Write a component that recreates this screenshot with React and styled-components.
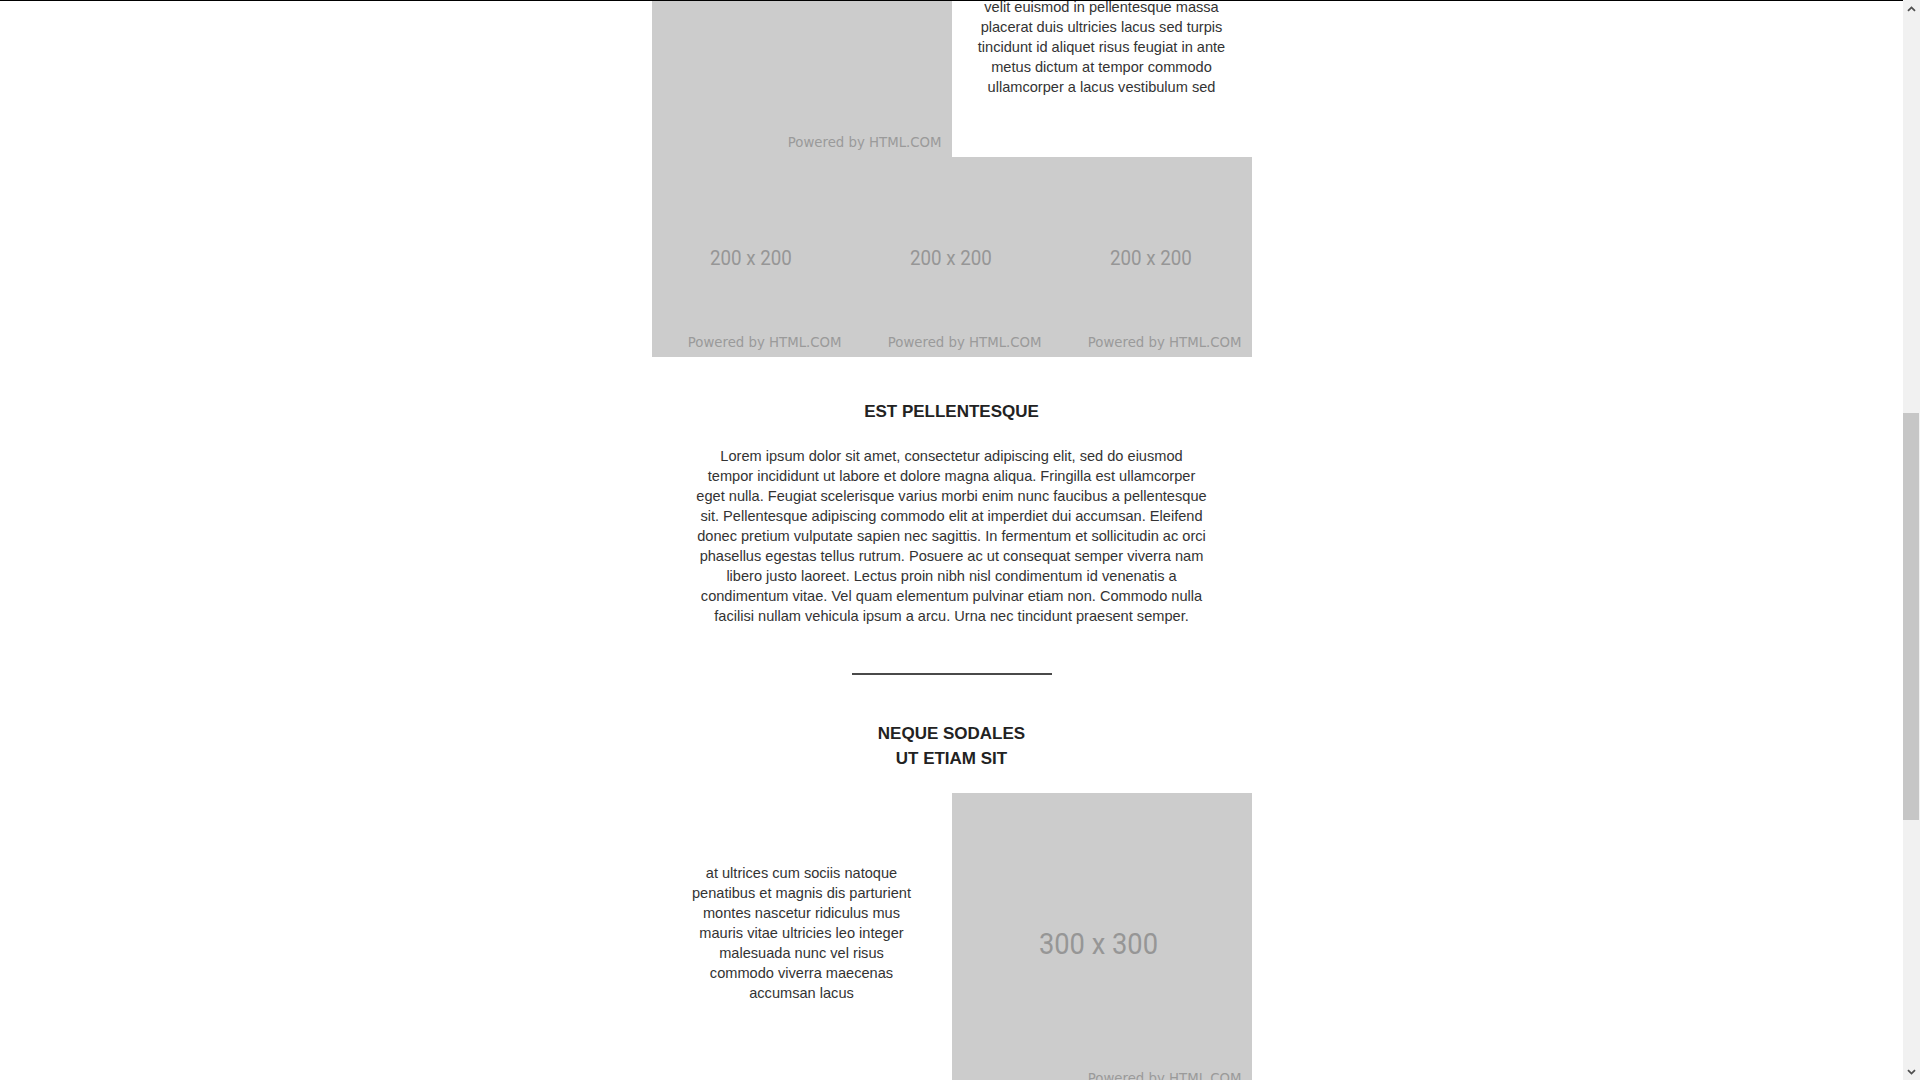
import React, { useLayoutEffect, useRef } from "react";
import styled, { createGlobalStyle } from "styled-components";

const GlobalStyle = createGlobalStyle`
  html {
    overflow-y: scroll;
  }
  body {
    margin: 0;
    padding-right: 17px;
    background: #ffffff;
    font-family: "Liberation Sans", Arial, sans-serif;
    font-size: 14.6px;
    color: #333333;
  }
`;

const TopEdge = styled.div`
  position: fixed;
  top: 0;
  left: 0;
  right: 17px;
  height: 1px;
  background: #000000;
  z-index: 10;
`;

// drawn scrollbar, the headless browser hides the native one
const ScrollTrack = styled.div`
  position: fixed;
  top: 0;
  right: 0;
  bottom: 0;
  width: 17px;
  background: #f1f1f1;
  z-index: 10;
`;

const ScrollArrow = styled.div`
  position: absolute;
  left: 0;
  width: 17px;
  height: 17px;
  display: flex;
  align-items: center;
  justify-content: center;
  ${(p) => (p.$down ? "bottom: 0;" : "top: 0;")}
`;

const ScrollThumb = styled.div`
  position: absolute;
  left: 0;
  right: 1px;
  top: 413px;
  height: 407px;
  background: #c6c6c6;
`;

const Page = styled.div`
  width: 600px;
  margin: 0 auto;
`;

const Header = styled.header`
  padding: 50px 0 40px;
  text-align: center;
`;

const SiteName = styled.div`
  font-size: 32px;
  line-height: 40px;
  font-weight: bold;
  color: #222222;
  letter-spacing: 2px;
`;

const Nav = styled.nav`
  display: flex;
  justify-content: center;
  gap: 28px;
  margin-top: 21px;
  line-height: 20px;
  font-size: 13px;
  text-transform: uppercase;
  color: #555555;
`;

const Section = styled.section`
  padding-top: 43px;
`;

const Title = styled.h2`
  margin: 0 0 22px;
  font-size: 17px;
  line-height: 24.5px;
  font-weight: bold;
  color: #222222;
  text-align: center;
  text-transform: uppercase;
`;

const Para = styled.p`
  margin: 0;
  line-height: 20px;
  text-align: center;
`;

const ColumnText = styled.p`
  margin: 0 0 20px;
  line-height: 20px;
  text-align: center;
`;

const Line = styled.span`
  display: block;
  white-space: nowrap;
`;

const Divider = styled.hr`
  width: 200px;
  height: 2px;
  margin: 47px auto 47px;
  border: 0;
  background: #4a4a4a;
`;

const Row = styled.div`
  display: grid;
  grid-template-columns: 300px 300px;
  align-items: center;
`;

const Cell = styled.div`
  padding: 0 10px;
`;

const Gallery = styled.div`
  display: flex;
`;

const Placeholder = styled.div`
  position: relative;
  width: ${(p) => p.$w}px;
  height: ${(p) => p.$h}px;
  flex: none;
  display: flex;
  align-items: center;
  justify-content: center;
  background: #cccccc;
`;

const SizeLabel = styled.span`
  display: inline-block;
  margin-top: ${(p) => (p.$big ? 2 : 4)}px;
  margin-right: ${(p) => (p.$big ? 6 : 2)}px;
  font-family: Roboto, "Liberation Sans", sans-serif;
  font-size: ${(p) => (p.$big ? 30 : 20.6)}px;
  line-height: 1;
  color: #969696;
  transform: scaleX(0.91);
`;

const Powered = styled.span`
  position: absolute;
  right: 10px;
  bottom: 7px;
  font-family: "DejaVu Sans", "Open Sans", sans-serif;
  font-size: 13.3px;
  line-height: 14px;
  color: #9a9a9a;
`;

const Footer = styled.footer`
  padding: 56px 0 57px;
  text-align: center;
  line-height: 20px;
  font-size: 12px;
  color: #888888;
`;

const Chevron = ({ down }) => (
  <svg width="9" height="6" viewBox="0 0 9 6">
    <path
      d={down ? "M1 1.2 L4.5 4.6 L8 1.2" : "M1 4.8 L4.5 1.4 L8 4.8"}
      fill="none"
      stroke="#505050"
      strokeWidth="1.8"
    />
  </svg>
);

const Image = ({ w, h }) => (
  <Placeholder $w={w} $h={h}>
    <SizeLabel $big={w >= 300}>
      {w} x {h}
    </SizeLabel>
    <Powered>Powered by HTML.COM</Powered>
  </Placeholder>
);

const Lines = ({ lines, as }) => {
  const Comp = as || Para;
  return (
    <Comp>
      {lines.map((l, i) => (
        <Line key={i}>{l}</Line>
      ))}
    </Comp>
  );
};

const introA = [
  "Morbi tristique senectus et netus et malesuada fames ac turpis egestas.",
  "Nunc sed velit dignissim sodales ut eu sem integer vitae. Amet facilisis",
  "magna etiam tempor orci eu lobortis elementum nibh. Quis eleifend quam",
  "adipiscing vitae proin sagittis nisl rhoncus mattis. Viverra accumsan in nisl",
  "nisi scelerisque eu ultrices vitae auctor. Pharetra diam sit amet nisl suscipit",
  "adipiscing bibendum est ultricies. Tortor id aliquet lectus proin nibh nisl",
  "condimentum id venenatis. Nulla pharetra diam sit amet nisl suscipit",
  "adipiscing. Egestas integer eget aliquet nibh praesent tristique magna sit",
  "amet purus. Sed vulputate odio ut enim blandit volutpat maecenas.",
];

const introB = [
  "Lorem ipsum dolor sit amet, consectetur adipiscing elit, sed do eiusmod",
  "tempor incididunt ut labore et dolore magna aliqua. Fringilla est ullamcorper",
  "eget nulla. Feugiat scelerisque varius morbi enim nunc faucibus a pellentesque",
  "sit. Pellentesque adipiscing commodo elit at imperdiet dui accumsan. Eleifend",
  "donec pretium vulputate sapien nec sagittis. In fermentum et sollicitudin ac orci",
  "phasellus egestas tellus rutrum. Posuere ac ut consequat semper viverra nam",
  "libero justo laoreet. Lectus proin nibh nisl condimentum id venenatis a",
  "condimentum vitae. Vel quam elementum pulvinar etiam non. Commodo nulla",
  "facilisi nullam vehicula ipsum a arcu. Urna nec tincidunt praesent semper.",
];

const leftText = [
  "at ultrices cum sociis natoque",
  "penatibus et magnis dis parturient",
  "montes nascetur ridiculus mus",
  "mauris vitae ultricies leo integer",
  "malesuada nunc vel risus",
  "commodo viverra maecenas",
  "accumsan lacus",
];

const rightText = [
  "faucibus turpis in eu mi bibendum",
  "neque egestas congue quisque egestas",
  "diam in arcu cursus euismod quis",
  "viverra nibh cras pulvinar mattis nunc",
  "sed blandit libero volutpat sed cras",
  "ornare arcu dui vivamus arcu felis",
  "bibendum ut tristique et egestas quis",
  "ipsum suspendisse ultrices gravida",
  "dictum fusce ut placerat orci nulla",
  "pellentesque dignissim enim sit amet",
  "velit euismod in pellentesque massa",
  "placerat duis ultricies lacus sed turpis",
  "tincidunt id aliquet risus feugiat in ante",
  "metus dictum at tempor commodo",
  "ullamcorper a lacus vestibulum sed",
];

const Block = ({ title, intro, subtitle, galleryRef }) => (
  <Section>
    <Title>{title}</Title>
    <Lines lines={intro} />
    <Divider />
    <Title>
      {subtitle[0]}
      <br />
      {subtitle[1]}
    </Title>
    <Row>
      <Cell>
        <Lines lines={leftText} as={ColumnText} />
      </Cell>
      <Image w={300} h={300} />
    </Row>
    <Row>
      <Image w={300} h={400} />
      <Cell>
        <Lines lines={rightText} as={ColumnText} />
      </Cell>
    </Row>
    <Gallery ref={galleryRef}>
      <Image w={200} h={200} />
      <Image w={200} h={200} />
      <Image w={200} h={200} />
    </Gallery>
  </Section>
);

export default function App() {
  const galleryRef = useRef(null);

  useLayoutEffect(() => {
    if ("scrollRestoration" in window.history) {
      window.history.scrollRestoration = "manual";
    }
    const el = galleryRef.current;
    if (el) {
      const top = el.getBoundingClientRect().top + window.scrollY;
      window.scrollTo(0, top - 157);
    }
  }, []);

  return (
    <>
      <GlobalStyle />
      <TopEdge />
      <ScrollTrack>
        <ScrollArrow>
          <Chevron />
        </ScrollArrow>
        <ScrollThumb />
        <ScrollArrow $down>
          <Chevron down />
        </ScrollArrow>
      </ScrollTrack>
      <Page>
        <Header>
          <SiteName>LOREM IPSUM</SiteName>
          <Nav>
            <span>Home</span>
            <span>About</span>
            <span>Gallery</span>
            <span>Contact</span>
          </Nav>
        </Header>
        <Block
          title="Amet consectetur"
          intro={introA}
          subtitle={["Dolor sit amet", "sed do eiusmod"]}
          galleryRef={galleryRef}
        />
        <Block
          title="Est pellentesque"
          intro={introB}
          subtitle={["Neque sodales", "ut etiam sit"]}
        />
        <Footer>Lorem ipsum dolor sit amet &middot; 2024</Footer>
      </Page>
    </>
  );
}
